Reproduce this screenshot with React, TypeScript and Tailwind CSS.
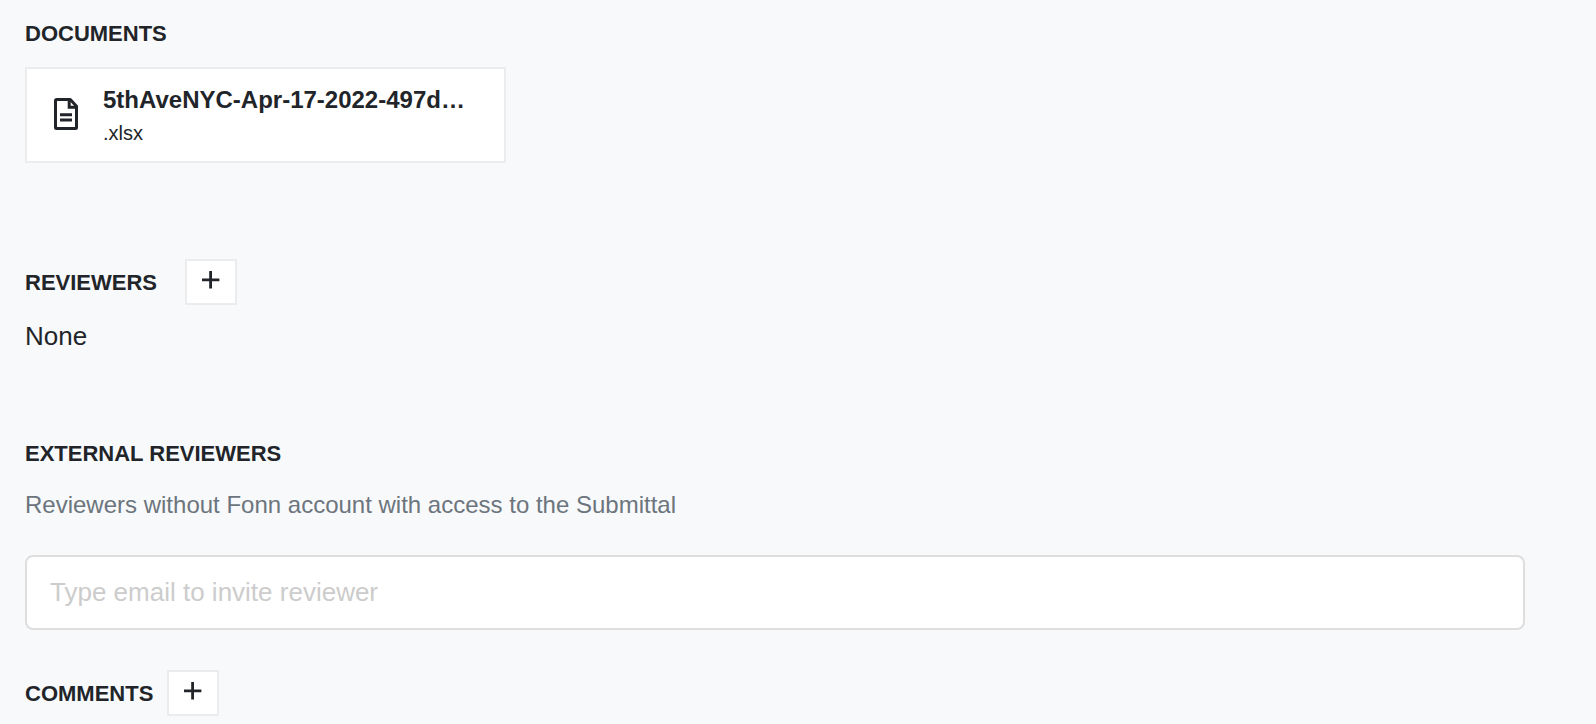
// App.tsx
import { useState } from "react";

const documents = [
  { name: "5thAveNYC-Apr-17-2022-497d…", extension: ".xlsx" },
];

const FileIcon = () => (
  <svg
    className="mb-0.5 h-8 w-6 shrink-0"
    viewBox="0 0 24 32"
    fill="none"
    stroke="currentColor"
    aria-hidden="true"
  >
    <path
      d="M2.5 1.5h13.8l6.2 6.8v21.2a1 1 0 0 1-1 1h-19a1 1 0 0 1-1-1v-27a1 1 0 0 1 1-1z"
      strokeWidth="3"
      strokeLinejoin="round"
    />
    <path d="M15.2 2v7.3H22.5" strokeWidth="3" />
    <path d="M6 16.8h12M6 22h12" strokeWidth="3" />
  </svg>
);

const AddButton = ({ label }: { label: string }) => (
  <button
    type="button"
    aria-label={label}
    className="flex h-[46px] w-[52px] items-center justify-center border-2 border-[#ebecee] bg-white pb-1 hover:bg-gray-50"
  >
    <svg
      className="size-[18px]"
      viewBox="0 0 18 18"
      stroke="currentColor"
      strokeWidth="2.8"
      aria-hidden="true"
    >
      <path d="M8.6 0v17.6M0 8.8h17.4" />
    </svg>
  </button>
);

const Heading = ({ children }: { children: string }) => (
  <h2 className="pt-0.5 text-[22px] leading-8 font-bold uppercase">
    {children}
  </h2>
);

const App = () => {
  const [email, setEmail] = useState("");

  return (
    <main className="min-h-screen bg-[#f8f9fb] pt-4 pr-[71px] pb-[7px] pl-[25px] font-['Liberation_Sans',Arial,sans-serif] text-[#212529]">
      <section className="mb-24">
        <Heading>Documents</Heading>
        <ul className="mt-[17px]">
          {documents.map((doc) => (
            <li
              key={doc.name}
              className="flex h-24 w-full max-w-[481px] items-center gap-[25px] border-2 border-[#ebecee] bg-white px-[27px]"
            >
              <FileIcon />
              <div className="min-w-0">
                <p className="truncate text-2xl leading-9 font-bold">
                  {doc.name}
                </p>
                <p className="text-xl leading-[30px]">{doc.extension}</p>
              </div>
            </li>
          ))}
        </ul>
      </section>

      <section className="mb-20">
        <div className="flex items-center gap-7">
          <Heading>Reviewers</Heading>
          <AddButton label="Add reviewer" />
        </div>
        <p className="mt-[11px] text-[26px] leading-10">None</p>
      </section>

      <section className="mb-10">
        <Heading>External reviewers</Heading>
        <label
          htmlFor="reviewer-email"
          className="mt-[17px] block text-2xl leading-9 text-[#6c757d]"
        >
          Reviewers without Fonn account with access to the Submittal
        </label>
        <input
          id="reviewer-email"
          type="email"
          value={email}
          onChange={(e) => setEmail(e.target.value)}
          placeholder="Type email to invite reviewer"
          className="mt-8 block h-[75px] w-full rounded-lg border-2 border-[#dedede] bg-white px-[23px] text-[26px] placeholder:text-[#cccccc]"
        />
      </section>

      <section className="flex items-center gap-3.5">
        <Heading>Comments</Heading>
        <AddButton label="Add comment" />
      </section>
    </main>
  );
};

export default App;
